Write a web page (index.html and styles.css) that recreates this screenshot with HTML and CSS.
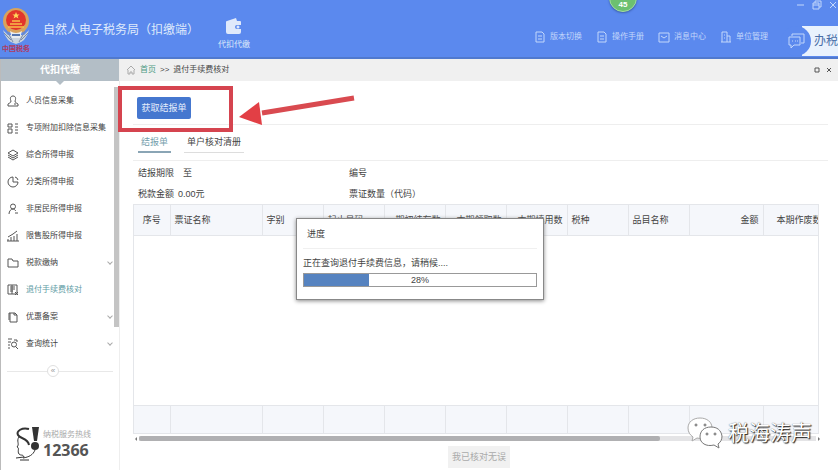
FILE: index.html
```html
<!DOCTYPE html>
<html lang="zh-CN">
<head>
  <meta charset="UTF-8">
  <title>自然人电子税务局（扣缴端）</title>
  <link rel="stylesheet" href="styles.css">
</head>
<body>

<header class="topbar">
  <svg class="emblem" viewBox="0 0 28 46">
    <path d="M1 24 Q4 36 14 38 Q24 36 27 24 L22 29 H6 Z" fill="#c9d3dd"/>
    <path d="M2 27 L9 34 M5 25 L11 36 M26 27 L19 34 M23 25 L17 36" stroke="#7c8ca8" stroke-width="1"/>
    <circle cx="14" cy="15" r="13" fill="#d9a35c"/>
    <circle cx="14" cy="14" r="10" fill="#e2352b"/>
    <path d="M14 6 l1 2.4 h2.6 l-2 1.6 .8 2.5 -2.4-1.5 -2.4 1.5 .8-2.5 -2-1.6 H13z" fill="#ffd75a"/>
    <path d="M8 18 h12 M10 15 h8 M6 21 h16" stroke="#f7c04a" stroke-width="1.5"/>
    <path d="M8 25 Q14 29 20 25 L18 32 H10 Z" fill="#e9edf0"/>
    <path d="M10 29 h8" stroke="#5676ae" stroke-width="2"/>
    <text x="14" y="45" text-anchor="middle" class="emblem-text">中国税务</text>
  </svg>
  <h1 class="app-title">自然人电子税务局（扣缴端）</h1>
  <a class="module" href="#">
    <svg width="18" height="18" viewBox="0 0 18 18">
      <path d="M2 4 L11 1 L12 4 H15 Q16 4 16 5 V8 H12 A2 2 0 0 0 12 12 H16 V15 Q16 17 14 17 H3 Q1 17 1 15 V5 Q1 4 2 4Z" fill="#dfe9fb"/>
      <circle cx="13" cy="10" r="1.5" fill="#dfe9fb"/>
    </svg>
    代扣代缴
  </a>
  <nav class="topnav">
    <a href="#"><svg width="12" height="12" viewBox="0 0 12 12"><path d="M2 1H8L10 3V11H2ZM4 5H8M4 8H8"/></svg>版本切换</a>
    <a href="#"><svg width="12" height="12" viewBox="0 0 12 12"><path d="M2 1H8L10 3V11H2ZM4 5H8M4 8H8"/></svg>操作手册</a>
    <a href="#"><svg width="12" height="12" viewBox="0 0 12 12"><path d="M1 2H11V11H1ZM3 5L6 7L9 5"/></svg>消息中心</a>
    <a href="#"><svg width="12" height="12" viewBox="0 0 12 12"><path d="M2 11V1H7V11M7 5H10V11M1 11H11M4 4H5M4 7H5"/></svg>单位管理</a>
  </nav>
  <a class="service" href="#">
    <span class="service-icon">
      <svg width="18" height="18" viewBox="0 0 18 18"><path d="M5 4V2H17V11H14M2 5H13V13H7L4 16V13H2ZM5 9H6M8 9H9M10 9H11"/></svg>
    </span>
    <span class="service-text">办税</span>
  </a>
  <span class="badge">45</span>
  <div class="window-buttons">
    <button aria-label="最小化"><svg width="10" height="10" viewBox="0 0 10 10"><path d="M1 5H8"/></svg></button>
    <button aria-label="还原"><svg width="10" height="10" viewBox="0 0 10 10"><path d="M3 3V1H9V7H7M1 3H7V9H1ZM1 5H7"/></svg></button>
    <button aria-label="关闭"><svg width="10" height="10" viewBox="0 0 10 10"><path d="M2 2L8 8M8 2L2 8"/></svg></button>
  </div>
</header>

<div class="layout">
  <aside class="sidebar">
    <div class="side-title">代扣代缴</div>
    <div class="side-body">
      <nav class="menu">
        <a href="#"><svg viewBox="0 0 12 12"><path d="M6 1C3 1 3 4 4 6C4 8 2 8 1 9V11H11V9C10 8 8 8 8 6C9 4 9 1 6 1ZM7 9H9"/></svg>人员信息采集</a>
        <a href="#"><svg viewBox="0 0 12 12"><path d="M1 2H5V5H1ZM1 7H5V11H1ZM8 2H11M8 5H11M8 8H11M8 11H11"/></svg>专项附加扣除信息采集</a>
        <a href="#"><svg viewBox="0 0 12 12"><path d="M6 1L11 4L6 7L1 4ZM1 6L6 9L11 6M1 8L6 11L11 8"/></svg>综合所得申报</a>
        <a href="#"><svg viewBox="0 0 12 12"><path d="M6 1A5 5 0 1 0 11 6H6ZM8 1A4 4 0 0 1 11 4"/></svg>分类所得申报</a>
        <a href="#"><svg viewBox="0 0 12 12"><path d="M6 1A2.5 2.5 0 1 0 6 6A2.5 2.5 0 1 0 6 1ZM2 11C2 8 4 6 6 6C7 6 8 7 9 8M8 10H11"/></svg>非居民所得申报</a>
        <a href="#"><svg viewBox="0 0 12 12"><path d="M1 11V9M4 11V7M7 11V6M10 11V4M1 7L6 4L10 1M0 11H12"/></svg>限售股所得申报</a>
        <a href="#"><svg viewBox="0 0 12 12"><path d="M1 2H5L6 4H11V10H1Z"/></svg>税款缴纳<i class="chevron"></i></a>
        <a href="#" class="active"><svg viewBox="0 0 12 12"><path d="M1 1H10V10H1ZM3 3H8M3 5H8M3 7H6M5 1V10M8 8L11 11M11 8L8 11"/></svg>退付手续费核对</a>
        <a href="#"><svg viewBox="0 0 12 12"><path d="M3 2H8L10 4V11H3ZM3 2H2V9M7 2V4H10"/></svg>优惠备案<i class="chevron"></i></a>
        <a href="#"><svg viewBox="0 0 12 12"><path d="M1 1H5M1 4H4M1 7H3M1 10H3M7 4A2 2 0 1 0 7 9A2 2 0 1 0 7 4M9 9L11 11M7 2H10V4"/></svg>查询统计<i class="chevron"></i></a>
      </nav>
      <div class="side-scroll"></div>
    </div>
    <div class="collapse"><button aria-label="收起">«</button></div>
    <div class="hotline">
      <svg width="26" height="36" viewBox="0 0 26 36">
        <path d="M14 3C7 1 1 5 3 9C5 13 13 12 14 19" fill="none" stroke="#333" stroke-width="2"/>
        <path d="M4 11C1 15 5 18 2 21C5 22 2 25 4 28C6 30 8 28 9 31L1 32" fill="none" stroke="#333" stroke-width="1"/>
        <path d="M17 1H24L22 15H19Z" fill="#333"/>
        <circle cx="20" cy="20" r="4" fill="#333"/>
        <path d="M20 24C18 29 14 31 8 32M5 34H14" fill="none" stroke="#333" stroke-width="1"/>
      </svg>
      <div>
        <p>纳税服务热线</p>
        <strong>12366</strong>
      </div>
    </div>
  </aside>

  <main class="main">
    <div class="crumbs">
      <svg width="10" height="10" viewBox="0 0 10 10"><path d="M1 5L5 1L9 5M2 5V9H4V7H6V9H8V5"/></svg>
      <a href="#">首页</a>
      <span>&gt;&gt;</span>
      <span>退付手续费核对</span>
      <div class="crumb-buttons">
        <button aria-label="最大化"><svg width="6" height="6" viewBox="0 0 6 6"><path d="M1 1H5V5H1Z"/></svg></button>
        <button aria-label="关闭页面"><svg width="6" height="6" viewBox="0 0 6 6"><path d="M1 1L5 5M5 1L1 5"/></svg></button>
      </div>
    </div>

    <div class="toolbar">
      <button class="primary">获取结报单</button>
    </div>

    <div class="tabs">
      <a href="#" class="current">结报单</a>
      <a href="#">单户核对清册</a>
    </div>

    <div class="info">
      <div><span>结报期限</span><span class="gap">至</span></div>
      <div>编号</div>
      <div><span>税款金额</span><span>0.00元</span></div>
      <div>票证数量（代码）</div>
    </div>

    <div class="grid">
      <table>
        <colgroup>
          <col class="w-no"><col class="w-name"><col><col><col><col><col><col><col><col class="w-sum"><col class="w-void">
        </colgroup>
        <thead>
          <tr>
            <th class="center">序号</th>
            <th>票证名称</th>
            <th>字别</th>
            <th>起止号码</th>
            <th class="right">期初结存数</th>
            <th class="right">本期领取数</th>
            <th class="right">本期填用数</th>
            <th>税种</th>
            <th>品目名称</th>
            <th class="right">金额</th>
            <th class="right">本期作废数</th>
          </tr>
        </thead>
        <tbody>
          <tr><td colspan="11"></td></tr>
        </tbody>
        <tfoot>
          <tr><td></td><td></td><td></td><td></td><td></td><td></td><td></td><td></td><td></td><td></td><td></td></tr>
        </tfoot>
      </table>
    </div>
    <div class="hscroll"><i class="arrow-left"></i><div class="track"><div class="thumb"></div></div><i class="arrow-right"></i></div>

    <div class="actions"><button disabled>我已核对无误</button></div>
  </main>
</div>

<div class="dialog" role="dialog" aria-labelledby="dialogTitle">
  <h2 id="dialogTitle">进度</h2>
  <label for="loading">正在查询退付手续费信息，请稍候....</label>
  <div class="progress">
    <progress id="loading" value="28" max="100"></progress>
    <span>28%</span>
  </div>
</div>

<div class="mark-box"></div>
<svg class="mark-arrow" width="118" height="34" viewBox="0 0 118 34">
  <path d="M116 5L24 20" stroke="#d94a50" stroke-width="5"/>
  <path d="M1 24L21 9L24 32Z" fill="#e23f45"/>
</svg>

<div class="watermark">
  <svg width="36" height="32" viewBox="0 0 36 32">
    <path d="M13 1C6 1 1 5 1 11C1 15 3 18 6 20L5 24L10 21C17 23 25 18 25 11C25 5 20 1 13 1Z" fill="#fff" stroke="#aaa"/>
    <path d="M24 10C17 10 13 14 13 20C13 26 19 30 27 28L32 31L31 27C34 25 35 22 35 19C34 13 30 10 24 10Z" fill="#fff" stroke="#777"/>
    <g fill="#fff" stroke="#666"><circle cx="9" cy="8" r="1"/><circle cx="18" cy="8" r="1"/><circle cx="20" cy="17" r="1"/><circle cx="28" cy="17" r="1"/></g>
  </svg>
  税海涛声
</div>

</body>
</html>
```
FILE: styles.css
```css
* {
  box-sizing: border-box;
}

body {
  font-family: "Liberation Sans", "Noto Sans CJK SC", sans-serif;
  font-size: 9px;
  line-height: 12px;
  color: #444;
  background: #fff;
  margin: 0;
  padding-right: 2px;
  min-height: 100vh;
  display: flex;
  flex-direction: column;
  position: relative;
  overflow: hidden;
}

a {
  color: inherit;
  text-decoration: none;
}

button {
  font: inherit;
  border: none;
  padding: 0;
  background: none;
  color: inherit;
}

svg {
  flex: none;
}

/* top bar */
.topbar {
  position: relative;
  height: 59px;
  background: #5b89ee;
  border-bottom: 2px solid #5079ce;
  color: #dfe9fb;
  display: flex;
  align-items: center;
  overflow: hidden;
}

.emblem {
  width: 28px;
  height: 46px;
  margin-left: 2px;
}

.emblem-text {
  font-size: 7px;
  font-weight: bold;
  fill: #b23a60;
}

.app-title {
  font-size: 12px;
  line-height: 16px;
  font-weight: normal;
  margin: 2px 0 0 13px;
  white-space: nowrap;
}

.module {
  display: flex;
  flex-direction: column;
  align-items: center;
  gap: 4px;
  font-size: 8px;
  margin: 10px 0 0 19px;
}

.topnav {
  display: flex;
  gap: 14px;
  margin: 16px 13px 0 auto;
  font-size: 8px;
  color: #c3d7fb;
}

.topnav a {
  display: flex;
  align-items: center;
  gap: 4px;
}

.topnav svg,
.service svg,
.window-buttons svg {
  fill: none;
  stroke: #c3d7fb;
}

.service {
  display: flex;
  align-items: center;
  margin-top: 24px;
}

.service-icon {
  display: flex;
  align-items: center;
  justify-content: center;
  width: 30px;
  height: 30px;
  border-radius: 50%;
  margin-right: -9px;
  background: #5b89ee;
  z-index: 1;
}

.service-text {
  width: 36px;
  height: 30px;
  padding-left: 12px;
  background: #e9f2fd;
  color: #4a6fa8;
  font-size: 12px;
  line-height: 30px;
  white-space: nowrap;
}

.badge {
  position: absolute;
  top: -16px;
  left: 609px;
  width: 28px;
  height: 28px;
  border-radius: 50%;
  background: #6cc070;
  border: 1px solid #a4dda0;
  box-shadow: 0 1px 2px #3c62b0;
  color: #fff;
  font-size: 8px;
  font-weight: bold;
  line-height: 40px;
  text-align: center;
}

.window-buttons {
  position: absolute;
  top: 0;
  right: 0;
  display: flex;
  gap: 6px;
}

.window-buttons svg {
  display: block;
}

/* left menu */
.layout {
  flex: 1;
  display: flex;
}

.sidebar {
  width: 120px;
  flex: none;
  border-left: 1px solid #bbb;
  border-right: 1px solid #eee;
  display: flex;
  flex-direction: column;
}

.side-title {
  position: relative;
  height: 22px;
  line-height: 22px;
  background: #b3bec6;
  color: #fff;
  font-size: 10px;
  font-weight: bold;
  text-align: center;
}

.side-title::after {
  content: "";
  position: absolute;
  left: 55px;
  top: 22px;
  border: 4px solid transparent;
  border-top-color: #b3bec6;
}

.side-body {
  display: flex;
  padding-top: 6px;
}

.menu {
  flex: 1;
  font-size: 8px;
}

.menu a {
  display: flex;
  align-items: center;
  gap: 7px;
  height: 27px;
  padding-left: 6px;
  white-space: nowrap;
}

.menu svg {
  width: 12px;
  height: 12px;
  fill: none;
  stroke: #555;
}

.menu .active {
  color: #5d9ba4;
}

.chevron {
  width: 4px;
  height: 4px;
  margin: 0 2px 2px auto;
  border: solid #aaa;
  border-width: 0 1px 1px 0;
  transform: rotate(45deg);
}

.side-scroll {
  width: 5px;
  height: 240px;
  background: #c4c4c4;
}

.collapse {
  display: flex;
  align-items: center;
  justify-content: center;
  margin-top: 8px;
  padding-right: 14px;
  background: linear-gradient(#e8e8e8, #e8e8e8) center / 90% 1px no-repeat;
}

.collapse button {
  width: 12px;
  height: 12px;
  border: 1px solid #e0e0e0;
  border-radius: 50%;
  background: #fff;
  color: #999;
  font-size: 8px;
  line-height: 8px;
}

.hotline {
  display: flex;
  align-items: center;
  gap: 2px;
  margin: auto 0 8px 14px;
}

.hotline p {
  margin: 0;
  font-size: 8px;
  color: #aaa;
}

.hotline strong {
  display: block;
  font-family: "Noto Sans", sans-serif;
  font-size: 16px;
  line-height: 18px;
  color: #555;
}

/* page */
.main {
  flex: 1;
  min-width: 0;
  display: flex;
  flex-direction: column;
}

.crumbs {
  display: flex;
  align-items: center;
  gap: 4px;
  height: 22px;
  padding: 0 6px;
  background: #f0f0f0;
  font-size: 8px;
}

.crumbs svg {
  fill: none;
  stroke: #aaa;
}

.crumbs a {
  color: #4d9a82;
}

.crumb-buttons {
  display: flex;
  gap: 6px;
  margin-left: auto;
}

.crumb-buttons svg {
  display: block;
  stroke: #555;
}

.toolbar {
  height: 44px;
  margin: 0 10px 0 13px;
  padding: 16px 4px 0;
  border-bottom: 1px solid #eee;
}

.primary {
  display: block;
  width: 54px;
  height: 22px;
  border-radius: 2px;
  background: #4577cf;
  color: #e6eefb;
  font-size: 9px;
}

.tabs {
  display: flex;
  gap: 13px;
  height: 36px;
  margin: 0 10px 0 13px;
  padding: 9px 5px 0;
  border-bottom: 1px solid #eee;
}

.tabs a {
  height: 19px;
  line-height: 16px;
  padding: 0 3px;
  border-bottom: 1px solid #ddd;
}

.tabs .current {
  color: #76a0ac;
  border-bottom: 2px solid #8aa5b5;
}

.info {
  display: grid;
  grid-template-columns: 211px 1fr;
  align-content: start;
  row-gap: 9px;
  height: 43px;
  margin: 0 19px 0 18px;
  padding-top: 6px;
}

.info span {
  margin-right: 4px;
}

.info .gap {
  margin-left: 5px;
}

.grid {
  margin: 0 19px 0 13px;
  border: solid #e4e6ea;
  border-width: 0 1px;
  overflow: hidden;
}

table {
  width: 692px;
  table-layout: fixed;
  border-collapse: collapse;
}

col {
  width: 61px;
}

.w-no {
  width: 36px;
}

.w-name {
  width: 92px;
}

.w-sum {
  width: 74px;
}

.w-void {
  width: 63px;
}

th,
tfoot td {
  height: 31px;
  padding: 0 4px;
  background: #f5f7fb;
  border: 1px solid #e4e6ea;
  border-left: none;
  font-weight: normal;
  text-align: left;
  white-space: nowrap;
}

tfoot td {
  height: 28px;
}

tbody td {
  height: 170px;
  padding: 0;
}

th.center {
  text-align: center;
}

th.right {
  text-align: right;
}

.hscroll {
  display: flex;
  align-items: center;
  gap: 2px;
  height: 9px;
  margin: 0 16px 0 13px;
}

.hscroll i {
  border: 2px solid transparent;
}

.hscroll .arrow-left {
  border-right-color: #777;
}

.hscroll .arrow-right {
  border-left-color: #777;
}

.track {
  flex: 1;
  height: 5px;
  background: #e4e4e6;
}

.thumb {
  width: 77%;
  height: 5px;
  border-radius: 2px;
  background: #b0b0b2;
}

.actions {
  text-align: center;
  padding-top: 3px;
}

.actions button {
  width: 62px;
  height: 22px;
  background: #f1f1f1;
  color: #aaa;
  font-size: 9px;
}

/* progress dialog */
.dialog {
  position: absolute;
  top: 218px;
  left: 50%;
  width: 248px;
  height: 82px;
  margin-left: -124px;
  padding: 0 6px;
  background: #fff;
  border: 1px solid #888;
  box-shadow: 0 1px 4px #888;
}

.dialog h2 {
  margin: 0 0 8px;
  padding: 0 4px;
  height: 30px;
  font-size: 9px;
  font-weight: normal;
  line-height: 31px;
  border-bottom: 1px solid #f0f0f0;
}

.dialog label {
  display: block;
  height: 16px;
}

.progress {
  position: relative;
  height: 14px;
}

progress {
  appearance: none;
  display: block;
  width: 100%;
  height: 14px;
  border: 1px solid #999;
}

progress::-webkit-progress-bar {
  background: #fff;
}

progress::-webkit-progress-value {
  background: #5683c0;
}

.progress span {
  position: absolute;
  inset: 0;
  text-align: center;
  line-height: 14px;
}

/* marks over the page */
.mark-box {
  position: absolute;
  top: 86px;
  left: 118px;
  width: 115px;
  height: 46px;
  border: 4px solid #d5444f;
}

.mark-arrow {
  position: absolute;
  top: 93px;
  left: 238px;
}

.watermark {
  position: absolute;
  right: 28px;
  bottom: 21px;
  display: flex;
  align-items: center;
  gap: 5px;
  color: #fff;
  font-size: 21px;
  line-height: 32px;
  text-shadow: 1px 1px 1px #222, 0 0 1px #555;
}
```
